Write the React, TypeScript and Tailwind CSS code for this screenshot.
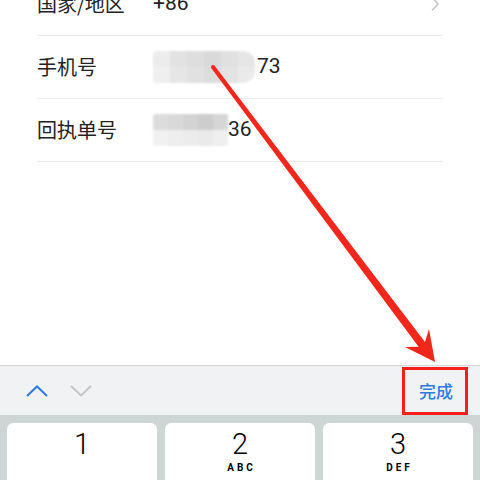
import React from "react";

const cjk = { fontFamily: '"Noto Sans CJK SC", "Noto Sans", sans-serif' };
const num = { fontFamily: 'Roboto, "Noto Sans", "Liberation Sans", sans-serif' };

type Cell = string[];

function Mosaic({ cols, rows, cell, rounded }: { cols: number; rows: Cell[]; cell: number; rounded: string }) {
  return (
    <div className={`flex flex-col overflow-hidden blur-[1px] ${rounded}`}>
      {rows.map((r, i) => (
        <div key={i} className="flex">
          {r.slice(0, cols).map((c, j) => (
            <div key={j} style={{ width: cell, height: 16, background: c }} />
          ))}
        </div>
      ))}
    </div>
  );
}

function Row({ label, children, chevron }: { label: string; children: React.ReactNode; chevron?: boolean }) {
  return (
    <div className="flex h-[63px] items-center border-b border-[#ececec]">
      <div className="w-[116px] text-[20px] text-[#222]" style={cjk}>
        {label}
      </div>
      <div className="flex flex-1 items-center">{children}</div>
      {chevron && (
        <svg width="10" height="16" viewBox="0 0 10 16" className="mr-[3px]">
          <path d="M2 1.5 L8 8 L2 14.5" fill="none" stroke="#c4c4c8" strokeWidth="1.6" />
        </svg>
      )}
    </div>
  );
}

function Key({ digit, letters }: { digit: string; letters?: string }) {
  return (
    <div className="flex h-[64px] flex-1 flex-col items-center rounded-[6px] bg-white pt-[3px] shadow-[0_1px_0_#8a8f92]">
      <div className="text-[29px] font-light leading-[36px] text-black" style={num}>
        {digit}
      </div>
      {letters && (
        <div className="text-[10px] font-bold leading-[12px] tracking-[3px] text-black pl-[3px]" style={num}>
          {letters}
        </div>
      )}
    </div>
  );
}

export default function App() {
  return (
    <div className="relative h-[480px] w-[480px] overflow-hidden bg-white">
      <div className="mx-[37px] -mt-[27px]">
        <Row label="国家/地区" chevron>
          <span className="text-[21px] text-[#222]" style={num}>
            +86
          </span>
        </Row>
        <Row label="手机号">
          <Mosaic
            cols={6}
            cell={17}
            rounded="rounded-r-[12px] rounded-l-[4px]"
            rows={[
              ["#ececec", "#e2e2e2", "#dedede", "#d9d9d9", "#e0e0e0", "#e6e6e6"],
              ["#efefef", "#e6e6e6", "#e1e1e1", "#dcdcdc", "#e3e3e3", "#eaeaea"],
            ]}
          />
          <span className="text-[21px] text-[#222] ml-[2px]" style={num}>
            73
          </span>
        </Row>
        <Row label="回执单号">
          <Mosaic
            cols={5}
            cell={15}
            rounded="rounded-[2px]"
            rows={[
              ["#dcdcdc", "#d8d8d8", "#d3d3d3", "#cdcdcd", "#d6d6d6"],
              ["#f1f1f1", "#eeeeee", "#ececec", "#eaeaea", "#efefef"],
            ]}
          />
          <span className="text-[21px] text-[#222]" style={num}>
            36
          </span>
        </Row>
      </div>

      {/* keyboard accessory bar and number pad */}
      <div className="absolute bottom-0 left-0 right-0">
        <div className="flex h-[50px] items-center border-t border-[#d4d6d8] bg-[#f1f2f4]">
          <div className="ml-[26px] flex items-center gap-[22px]">
            <svg width="22" height="12" viewBox="0 0 22 12">
              <path d="M1 11 L11 1.5 L21 11" fill="none" stroke="#2f7be0" strokeWidth="2" />
            </svg>
            <svg width="22" height="12" viewBox="0 0 22 12">
              <path d="M1 1 L11 10.5 L21 1" fill="none" stroke="#c3c4c8" strokeWidth="1.8" />
            </svg>
          </div>
          <div className="flex-1" />
          <div className="mr-[12px] flex h-[48px] w-[66px] items-center justify-center border-[3px] border-[#f5201a]">
            <span className="text-[17px] font-medium text-[#2f7be0] ml-[2px]" style={cjk}>
              完成
            </span>
          </div>
        </div>
        <div className="flex h-[65px] gap-[8px] bg-[#ced6d5] px-[7px] pt-[8px]">
          <Key digit="1" />
          <Key digit="2" letters="ABC" />
          <Key digit="3" letters="DEF" />
        </div>
      </div>

      {/* red annotation arrow: tapered shaft with a filled head */}
      <svg className="pointer-events-none absolute left-0 top-0" width="480" height="480" viewBox="0 0 480 480">
        <circle cx="213" cy="67" r="2" fill="#f3261c" />
        <polygon
          points="214.6,65.8 425,342 429,329 435,362 405,347 418.6,346.8 211.4,68.2"
          fill="#f3261c"
        />
      </svg>
    </div>
  );
}
